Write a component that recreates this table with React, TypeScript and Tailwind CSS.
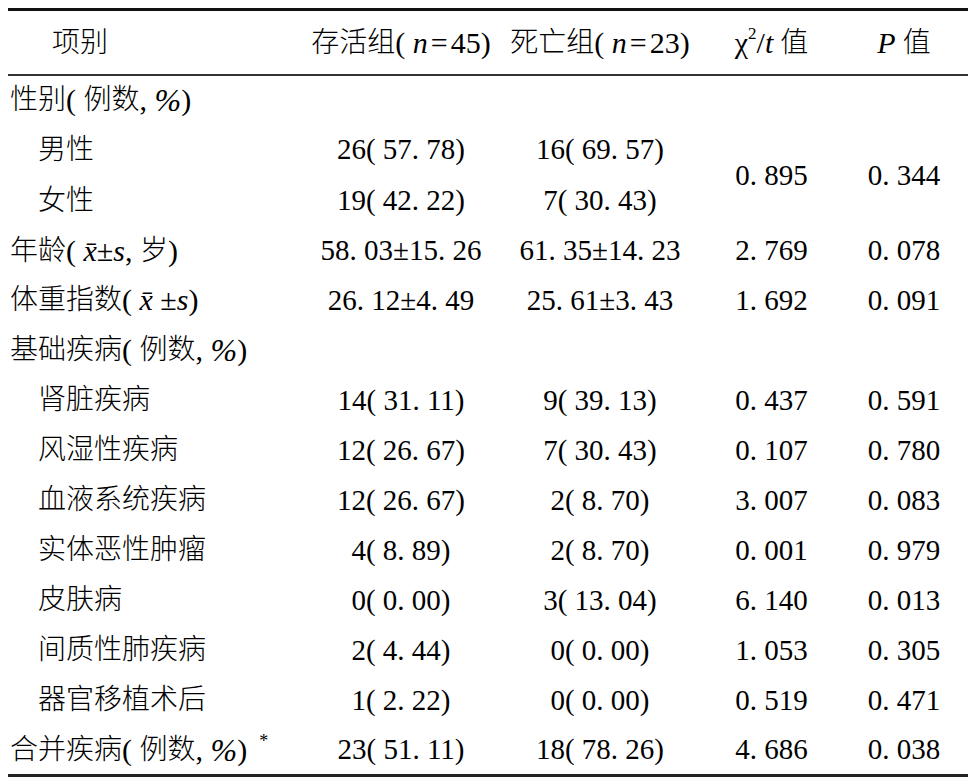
type Row = {
  label: React.ReactNode;
  indent?: boolean;
  a?: string;
  b?: string;
  stat?: string;
  p?: string;
  merged?: boolean;
};

const xbar = <span className="text-[30px] italic">x&#772;</span>;
const s = <span className="text-[30px] italic">s</span>;

// "( 例数,%)" suffix used by the group labels
const count = (
  <>
    <span className="text-[30px] whitespace-pre">( </span>例数
    <span className="text-[30px] whitespace-pre">, </span>
    <span className="text-[32px] italic">%</span>
    <span className="text-[30px]">)</span>
  </>
);

const rows: Row[] = [
  { label: <>性别{count}</> },
  { label: "男性", indent: true, a: "26( 57. 78)", b: "16( 69. 57)", stat: "0. 895", p: "0. 344", merged: true },
  { label: "女性", indent: true, a: "19( 42. 22)", b: "7( 30. 43)" },
  {
    label: (
      <>
        年龄<span className="text-[30px] whitespace-pre">( </span>
        {xbar}
        <span className="text-[30px]">±</span>
        {s}
        <span className="text-[30px] whitespace-pre">, </span>岁<span className="text-[30px]">)</span>
      </>
    ),
    a: "58. 03±15. 26",
    b: "61. 35±14. 23",
    stat: "2. 769",
    p: "0. 078",
  },
  {
    label: (
      <>
        体重指数<span className="text-[30px] whitespace-pre">( </span>
        {xbar}
        <span className="text-[30px] whitespace-pre"> ±</span>
        {s}
        <span className="text-[30px]">)</span>
      </>
    ),
    a: "26. 12±4. 49",
    b: "25. 61±3. 43",
    stat: "1. 692",
    p: "0. 091",
  },
  { label: <>基础疾病{count}</> },
  { label: "肾脏疾病", indent: true, a: "14( 31. 11)", b: "9( 39. 13)", stat: "0. 437", p: "0. 591" },
  { label: "风湿性疾病", indent: true, a: "12( 26. 67)", b: "7( 30. 43)", stat: "0. 107", p: "0. 780" },
  { label: "血液系统疾病", indent: true, a: "12( 26. 67)", b: "2( 8. 70)", stat: "3. 007", p: "0. 083" },
  { label: "实体恶性肿瘤", indent: true, a: "4( 8. 89)", b: "2( 8. 70)", stat: "0. 001", p: "0. 979" },
  { label: "皮肤病", indent: true, a: "0( 0. 00)", b: "3( 13. 04)", stat: "6. 140", p: "0. 013" },
  { label: "间质性肺疾病", indent: true, a: "2( 4. 44)", b: "0( 0. 00)", stat: "1. 053", p: "0. 305" },
  { label: "器官移植术后", indent: true, a: "1( 2. 22)", b: "0( 0. 00)", stat: "0. 519", p: "0. 471" },
  {
    label: (
      <>
        合并疾病{count}
        <span className="relative -top-[9px] ml-[12px] text-[18px]">*</span>
      </>
    ),
    a: "23( 51. 11)",
    b: "18( 78. 26)",
    stat: "4. 686",
    p: "0. 038",
  },
];

const num = "flex items-center justify-center text-[29px] whitespace-pre";
const cols = "grid grid-cols-[297px_192px_206px_137px_128px]";

export default function App() {
  return (
    <main
      className="min-h-screen bg-white pt-[8px] pl-[8px] text-black"
      style={{ fontFamily: '"Liberation Serif", "Noto Sans CJK SC", serif' }}
    >
      <div className="w-[960px] text-[28px] leading-none font-light">
        <div className="h-[3px] bg-[#111]" />
        <div className={`${cols} h-[63px] items-center`}>
          <div className="pl-[44px]">项别</div>
          <div className="flex items-center justify-center whitespace-pre">
            存活组<span className="text-[30px]">( </span>
            <span className="text-[30px] italic">n</span>
            <span className="mx-[3px] text-[30px]">=</span>
            <span className="text-[30px]">45)</span>
          </div>
          <div className="flex items-center justify-center whitespace-pre">
            死亡组<span className="text-[30px]">( </span>
            <span className="text-[30px] italic">n</span>
            <span className="mx-[3px] text-[30px]">=</span>
            <span className="text-[30px]">23)</span>
          </div>
          <div className="flex items-center justify-center whitespace-pre">
            <span className="text-[30px]">χ</span>
            <span className="relative -top-[9px] text-[17px]">2</span>
            <span className="text-[30px]">/</span>
            <span className="text-[30px] italic">t</span> 值
          </div>
          <div className="flex items-center justify-center whitespace-pre">
            <span className="text-[30px] italic">P</span> 值
          </div>
        </div>
        <div className="h-[2px] bg-[#333]" />
        <div className={`${cols} grid-rows-[48px_51px_51px_49px_repeat(9,50px)_49px]`}>
          {rows.map((r, i) => (
            <>
              <div key={`l${i}`} className={`flex items-center ${r.indent ? "pl-[30px]" : "pl-[2px]"}`}>
                {r.label}
              </div>
              <div key={`a${i}`} className={num}>{r.a}</div>
              <div key={`b${i}`} className={num}>{r.b}</div>
              {r.stat !== undefined && (
                <div key={`s${i}`} className={`${num} ${r.merged ? "row-span-2" : ""}`}>{r.stat}</div>
              )}
              {r.p !== undefined && (
                <div key={`p${i}`} className={`${num} ${r.merged ? "row-span-2" : ""}`}>{r.p}</div>
              )}
              {r.stat === undefined && r.a === undefined && (
                <>
                  <div key={`e1${i}`} />
                  <div key={`e2${i}`} />
                </>
              )}
            </>
          ))}
        </div>
        <div className="h-[3px] bg-[#222]" />
      </div>
    </main>
  );
}
